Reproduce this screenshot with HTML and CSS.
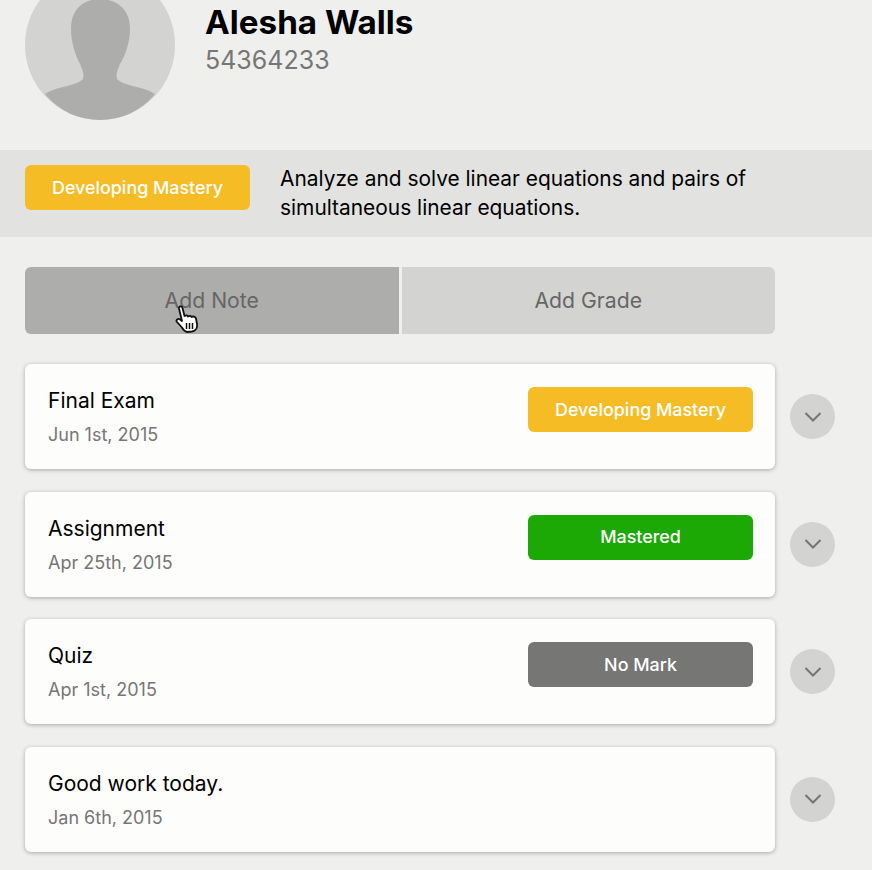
FILE: index.html
```html
<!DOCTYPE html>
<html>
<head>
  <title>Alesha Walls</title>
  <meta charset='utf-8'>
  <link rel="stylesheet" href="styles.css">
</head>
<body>

  <header class="student">
    <svg class="avatar" viewBox="0 0 150 150">
      <circle cx="75" cy="75" r="75" fill="#d3d3d2"/>
      <path d="M20 124 C30 117 50 116 57 110 C60 106 58 101 55 94 C50 84 46 72 46 58 C46 40 58 29 75 29 C92 29 105 40 105 58 C105 72 101 84 95 94 C92 101 90 106 93 110 C100 116 120 117 130 124 C116 141 96 150 75 150 C54 150 34 141 20 124 Z" fill="#adadac"/>
    </svg>
    <div class="student-info">
      <h1 class="student-name">Alesha Walls</h1>
      <div class="student-id">54364233</div>
    </div>
  </header>

  <section class="standard">
    <span class="badge badge-developing">Developing Mastery</span>
    <p class="standard-text">Analyze and solve linear equations and pairs of simultaneous linear equations.</p>
  </section>

  <div class="content">
    <div class="tabs">
      <button class="tab tab-active">Add Note
        <svg class="cursor" viewBox="0 0 24 28">
          <path d="M4 3.5 C3.5 1 7 0.5 7.5 3 L9.5 11 C11 10 12.5 10 13 11.5 C14.5 10.5 16 10.5 16.5 12 C18 11 20.5 11.5 21 13.5 L22 19 C22.5 23 20.5 26 17 26.5 L12 27 C9.5 26.5 8 24.5 6.5 22 L2 17 C0.5 15 3 13 5 14.5 L7 16 Z" fill="#fff" stroke="#111" stroke-width="1.8" stroke-linejoin="round"/>
          <path d="M11.5 18 V24 M14.5 18 V24 M17.5 18 V24" stroke="#111" stroke-width="1.5"/>
        </svg>
      </button>
      <button class="tab">Add Grade</button>
    </div>

    <div class="row">
      <div class="card">
        <div>
          <div class="card-title">Final Exam</div>
          <div class="card-date">Jun 1st, 2015</div>
        </div>
        <span class="badge badge-developing">Developing Mastery</span>
      </div>
      <button class="toggle"><svg viewBox="0 0 18 12"><path d="M1.5 2 L9 9.5 L16.5 2" fill="none" stroke="#747473" stroke-width="2"/></svg></button>
    </div>

    <div class="row">
      <div class="card">
        <div>
          <div class="card-title">Assignment</div>
          <div class="card-date">Apr 25th, 2015</div>
        </div>
        <span class="badge badge-mastered">Mastered</span>
      </div>
      <button class="toggle"><svg viewBox="0 0 18 12"><path d="M1.5 2 L9 9.5 L16.5 2" fill="none" stroke="#747473" stroke-width="2"/></svg></button>
    </div>

    <div class="row">
      <div class="card">
        <div>
          <div class="card-title">Quiz</div>
          <div class="card-date">Apr 1st, 2015</div>
        </div>
        <span class="badge badge-none">No Mark</span>
      </div>
      <button class="toggle"><svg viewBox="0 0 18 12"><path d="M1.5 2 L9 9.5 L16.5 2" fill="none" stroke="#747473" stroke-width="2"/></svg></button>
    </div>

    <div class="row">
      <div class="card">
        <div>
          <div class="card-title">Good work today.</div>
          <div class="card-date">Jan 6th, 2015</div>
        </div>
      </div>
      <button class="toggle"><svg viewBox="0 0 18 12"><path d="M1.5 2 L9 9.5 L16.5 2" fill="none" stroke="#747473" stroke-width="2"/></svg></button>
    </div>
  </div>

</body>
</html>
```

FILE: styles.css
```css
* {
  box-sizing: border-box;
}
html, body {
  height: 100%;
  overflow: hidden;
}
body {
  background: #efefee;
  color: #000;
  font-family: Inter, "Open Sans", sans-serif;
  margin: 0;
}
.student {
  display: flex;
  gap: 30px;
  height: 150px;
  padding-left: 25px;
}
.avatar {
  display: block;
  flex: none;
  height: 150px;
  margin-top: -30px;
  width: 150px;
}
.student-name {
  font-size: 33.2px;
  font-weight: 700;
  line-height: 44px;
  margin: 0;
}
.student-id {
  color: #767675;
  font-size: 25px;
  line-height: 32px;
}
.standard {
  align-items: flex-start;
  background: #e2e2e1;
  display: flex;
  gap: 30px;
  height: 87px;
  padding: 15px 25px 0;
}
.standard-text {
  font-size: 20.9px;
  line-height: 28.5px;
  margin: 0;
  width: 490px;
}
.badge {
  align-items: center;
  border-radius: 6px;
  color: #fff;
  display: flex;
  flex: none;
  font-size: 17.9px;
  font-weight: 500;
  height: 45px;
  justify-content: center;
  padding-bottom: 1px;
  width: 225px;
}
.badge-developing {
  background: #f5bc26;
}
.badge-mastered {
  background: #1ca805;
}
.badge-none {
  background: #767675;
}
.content {
  padding: 30px 0 0 25px;
}
.tabs {
  display: flex;
  gap: 3px;
  margin-bottom: 30px;
  width: 750px;
}
.tab {
  background: #d3d3d2;
  border: none;
  border-radius: 0 6px 6px 0;
  color: #666665;
  flex: 1;
  font-family: inherit;
  font-size: 21.2px;
  height: 67px;
  padding: 0 0 2px;
  position: relative;
}
.tab-active {
  background: #adadac;
  border-radius: 6px 0 0 6px;
}
.cursor {
  height: 28px;
  left: 150px;
  position: absolute;
  top: 38px;
  width: 24px;
}
.row {
  align-items: center;
  display: flex;
  gap: 15px;
  margin-bottom: 22.5px;
}
.card {
  align-items: flex-start;
  background: #fdfdfc;
  border-radius: 6px;
  box-shadow: 0 1px 4px rgba(0, 0, 0, .3);
  display: flex;
  height: 105px;
  justify-content: space-between;
  padding: 23px 22px 23px 23px;
  width: 750px;
}
.card-title {
  font-size: 21px;
  line-height: 28px;
}
.card-date {
  color: #767675;
  font-size: 18px;
  line-height: 24px;
  margin-top: 8px;
}
.toggle {
  align-items: center;
  background: #d3d3d2;
  border: none;
  border-radius: 50%;
  display: flex;
  height: 45px;
  justify-content: center;
  padding: 0;
  width: 45px;
}
.toggle svg {
  display: block;
  height: 12px;
  width: 18px;
}
```
